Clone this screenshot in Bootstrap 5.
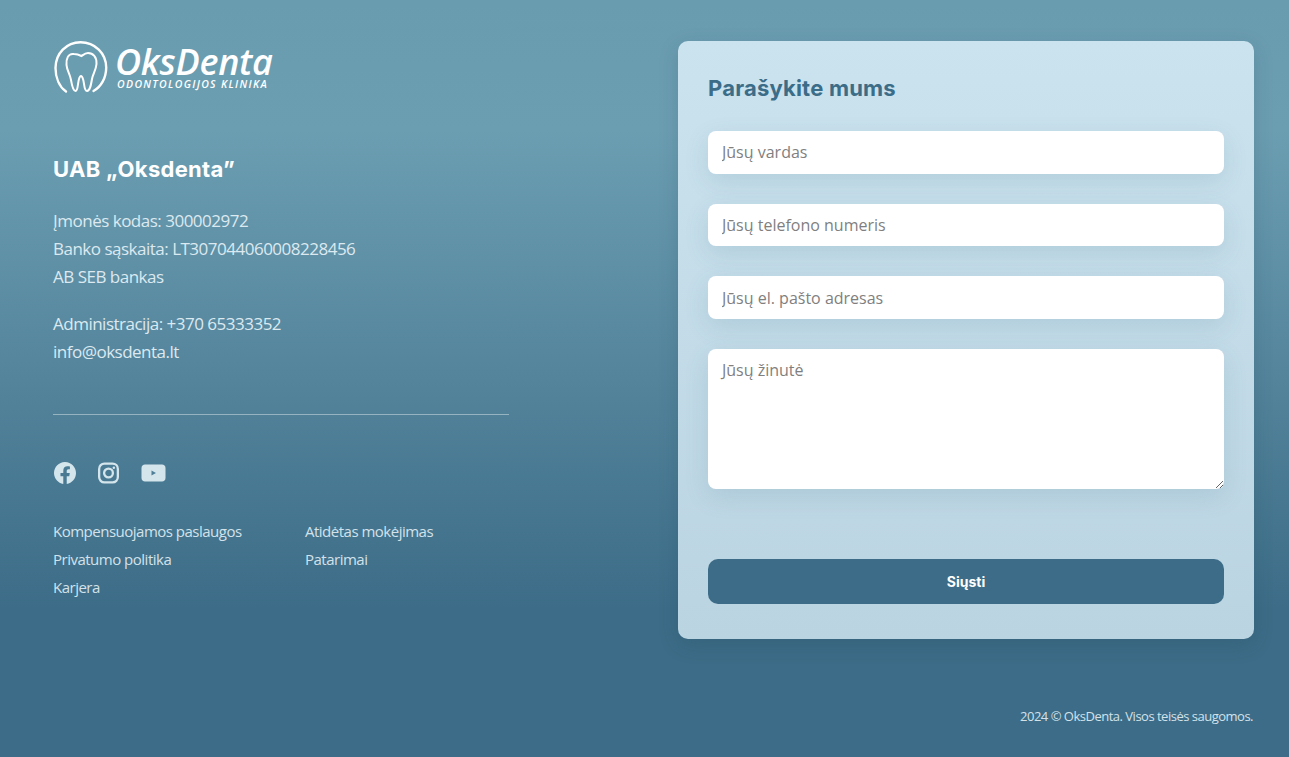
<!DOCTYPE html>
<html lang="lt">
<head>
  <meta charset="UTF-8">
  <meta name="viewport" content="width=device-width, initial-scale=1.0">
  <title>OksDenta - Kontaktai</title>
  <link href="https://cdn.jsdelivr.net/npm/bootstrap@5.3.0/dist/css/bootstrap.min.css" rel="stylesheet">
  <style>
    html, body { height: 100%; }
    body {
      background: #3c6c87 linear-gradient(180deg, #6a9cb0 0, #6c9eb2 130px, #3c6c87 610px);
      font-family: "Open Sans", "Noto Sans", sans-serif;
      color: #dce9f0;
      overflow: hidden;
    }
    .page-wrap { padding: 41px 35px 0 53px; height: 757px; }
    .left-side { width: 456px; }
    .logo-box { height: 52px; color: #fff; padding-left: 1px; }
    .logo-name { font-size: 36px; font-style: italic; font-weight: 600; line-height: 30px; letter-spacing: -.3px; margin-top: 6px; }
    .logo-sub { font-size: 10.500px; font-style: italic; font-weight: 600; letter-spacing: 1.350px; line-height: 10px; margin: 2px 0 0 2px; }
    .logo-text { margin-left: 7px; }
    .company-name { font-family: Inter, sans-serif; font-size: 22px; font-weight: 700; color: #fff; margin: 62px 0 24px; line-height: 28px; letter-spacing: .3px; }
    .info-block { font-size: 17px; line-height: 28px; letter-spacing: -.5px; margin-bottom: 19px; }
    .info-block a { color: inherit; text-decoration: none; }
    .sep-line { border-top: 1px solid rgba(255,255,255,.4); margin: 48px 0 46px; opacity: 1; }
    .social-row { gap: 22px; height: 24px; color: #d5e5ec; margin-bottom: 32px; padding-left: 1px; }
    .foot-links { font-size: 15px; line-height: 28px; letter-spacing: -.5px; color: #d3e2ea; }
    .foot-links a { display: block; color: inherit; text-decoration: none; }
    .links-col { width: 252px; }
    .form-panel {
      width: 576px; height: 598px; padding: 30px;
      background: linear-gradient(180deg, #cbe3ee 0, #bbd4e2 100%);
      border-radius: 10px;
      box-shadow: 0 6px 20px rgba(30,60,80,.18);
    }
    .form-title { font-family: Inter, sans-serif; font-size: 22px; font-weight: 700; color: #3b6c88; line-height: 34px; margin: 0 0 26px; letter-spacing: .2px; }
    .form-field.form-control {
      height: 42.670px; margin-bottom: 30px; border: 0; border-radius: 8px; padding: 0 14px;
      font-family: "Open Sans", sans-serif; font-size: 16px;
      box-shadow: 0 8px 24px rgba(60,108,135,.14);
    }
    textarea.form-field.form-control { height: 140px; padding-top: 9px; margin-bottom: 70px; }
    .form-field::placeholder { color: #7f7f7f; opacity: 1; }
    .send-btn.btn { width: 100%; height: 45px; background: #3c6c87; border: 0; border-radius: 10px; color: #fff; font-family: Inter, sans-serif; font-size: 14px; font-weight: 700; }
    .copy-note { font-size: 13px; letter-spacing: -.5px; color: #d3e2ea; text-align: right; margin-top: 63px; padding-right: 1px; line-height: 28px; }
  </style>
</head>
<body>
<div class="page-wrap d-flex justify-content-between">
  <div class="left-side">
    <div class="logo-box d-flex">
      <svg width="54" height="53" viewBox="0 0 54 53" fill="none" stroke="#fff" stroke-linecap="round" class="flex-shrink-0">
        <path d="M12 50.500C5.500 46 1.500 37 1.500 27C1.500 12.500 12.500 1.200 26.500 1.200C41 1.200 52.200 12.500 52.200 26.500C52.200 37 47 46 39.500 50" stroke-width="2.400"/>
        <path d="M20 13C14 12 12 18 12.500 24C13 30 16 33 17 39C18 45 19 50 21.500 50C25 50 23 36 27 35C31 36 29 50 33 50C36 50 37 44 38 38C39 33 42 29 42.500 23C43 16 39 12 34 12C31 12 29 14 27.500 15C25.500 14 23 13 20 13Z" stroke-width="2"/>
      </svg>
      <div class="logo-text">
        <div class="logo-name">OksDenta</div>
        <div class="logo-sub">ODONTOLOGIJOS KLINIKA</div>
      </div>
    </div>
    <h2 class="company-name">UAB „Oksdenta”</h2>
    <div class="info-block">Įmonės kodas: 300002972<br>Banko sąskaita: LT307044060008228456<br>AB SEB bankas</div>
    <div class="info-block mb-0">Administracija: +370 65333352<br><a href="#">info@oksdenta.lt</a></div>
    <hr class="sep-line">
    <div class="social-row d-flex align-items-center">
      <svg width="22" height="22" viewBox="0 0 16 16" fill="currentColor"><path d="M16 8.049c0-4.446-3.582-8.05-8-8.05C3.580 0-.002 3.603-.002 8.050c0 4.017 2.926 7.347 6.750 7.951v-5.625h-2.030V8.050H6.750V6.275c0-2.017 1.195-3.131 3.022-3.131.876 0 1.791.157 1.791.157v1.980h-1.009c-.993 0-1.303.621-1.303 1.258v1.510h2.218l-.354 2.326H9.250V16c3.824-.604 6.750-3.934 6.750-7.951"/></svg>
      <svg width="21" height="22" viewBox="0 0 22 22" fill="none" stroke="currentColor" stroke-width="2.400"><rect x="1.200" y="1.200" width="19.600" height="19.600" rx="5.500"/><circle cx="11" cy="11" r="4.600"/><circle cx="16.600" cy="5.400" r="1.300" fill="currentColor" stroke="none"/></svg>
      <svg width="25" height="18" viewBox="0 0 25 18"><path fill="currentColor" d="M4 0.500H21C23 0.500 24.500 2 24.500 4V14C24.500 16 23 17.500 21 17.500H4C2 17.500 .5 16 .5 14V4C.5 2 2 .5 4 .5Z"/><path fill="#4f7f98" d="M10.500 6.500L15 9L10.500 11.500Z"/></svg>
    </div>
    <div class="foot-links d-flex">
      <div class="links-col">
        <a href="#">Kompensuojamos paslaugos</a>
        <a href="#">Privatumo politika</a>
        <a href="#">Karjera</a>
      </div>
      <div>
        <a href="#">Atidėtas mokėjimas</a>
        <a href="#">Patarimai</a>
      </div>
    </div>
  </div>
  <div>
    <form class="form-panel">
      <h3 class="form-title">Parašykite mums</h3>
      <input type="text" class="form-control form-field" placeholder="Jūsų vardas">
      <input type="text" class="form-control form-field" placeholder="Jūsų telefono numeris">
      <input type="email" class="form-control form-field" placeholder="Jūsų el. pašto adresas">
      <textarea class="form-control form-field" placeholder="Jūsų žinutė"></textarea>
      <button type="button" class="btn send-btn">Siųsti</button>
    </form>
    <div class="copy-note">2024 © OksDenta. Visos teisės saugomos.</div>
  </div>
</div>
<script src="https://cdn.jsdelivr.net/npm/bootstrap@5.3.0/dist/js/bootstrap.bundle.min.js"></script>
</body>
</html>
